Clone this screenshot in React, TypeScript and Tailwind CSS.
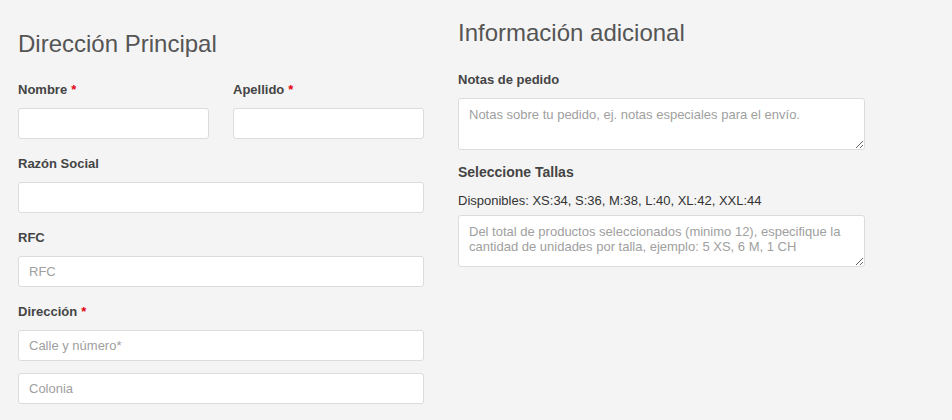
const font = { fontFamily: '"Liberation Sans", Arial, Helvetica, sans-serif' };

function Label({ text, required, className = "" }: { text: string; required?: boolean; className?: string }) {
  return (
    <label className={`block pt-[1px] text-[13px] font-bold leading-[18px] text-[#444] ${className}`}>
      {text}
      {required && <span className="ml-[4px] text-[#e4000f]">*</span>}
    </label>
  );
}

function Field({ placeholder = "", className = "" }: { placeholder?: string; className?: string }) {
  return (
    <input
      type="text"
      placeholder={placeholder}
      className={`block h-[31px] w-full rounded-[3px] border border-[#dcdcdc] bg-white px-[10px] text-[13px] text-[#333] outline-none placeholder:text-[#a0a0a0] ${className}`}
    />
  );
}

function Area({ placeholder }: { placeholder: string }) {
  return (
    <textarea
      placeholder={placeholder}
      className="block h-[52px] w-full rounded-[3px] border border-[#dcdcdc] bg-white px-[10px] pt-[8px] text-[13px] leading-[15px] text-[#333] outline-none placeholder:text-[#a0a0a0]"
    />
  );
}

export default function App() {
  return (
    <div className="h-[420px] w-[952px] overflow-hidden bg-[#f4f4f4]" style={font}>
      <div className="flex gap-[34px] pl-[18px]">
        {/* Dirección principal */}
        <section className="w-[406px] pt-[29px]">
          <h2 className="text-[24px] leading-[30px] text-[#555]">Dirección Principal</h2>

          <div className="mt-[21px] flex gap-[24px]">
            <div className="w-[191px]">
              <Label text="Nombre" required className="mb-[9px]" />
              <Field />
            </div>
            <div className="w-[191px]">
              <Label text="Apellido" required className="mb-[9px]" />
              <Field />
            </div>
          </div>

          <Label text="Razón Social" className="mb-[9px] mt-[15px]" />
          <Field />

          <Label text="RFC" className="mb-[9px] mt-[15px]" />
          <Field placeholder="RFC" />

          <Label text="Dirección" required className="mb-[9px] mt-[15px]" />
          <Field placeholder="Calle y número*" />
          <Field placeholder="Colonia" className="mt-[12px]" />
        </section>

        {/* Información adicional */}
        <section className="w-[407px] pt-[18px]">
          <h2 className="text-[24px] leading-[30px] text-[#555]">Información adicional</h2>

          <Label text="Notas de pedido" className="mb-[9px] mt-[22px]" />
          <Area placeholder="Notas sobre tu pedido, ej. notas especiales para el envío." />

          <h3 className="mt-[12px] text-[14px] font-bold leading-[20px] text-[#444]">Seleccione Tallas</h3>
          <p className="mt-[10px] text-[13px] leading-[18px] text-[#333]">
            Disponibles: XS:34, S:36, M:38, L:40, XL:42, XXL:44
          </p>
          <div className="mt-[5px]">
            <Area placeholder="Del total de productos seleccionados (minimo 12), especifique la cantidad de unidades por talla, ejemplo: 5 XS, 6 M, 1 CH" />
          </div>
        </section>
      </div>
    </div>
  );
}
